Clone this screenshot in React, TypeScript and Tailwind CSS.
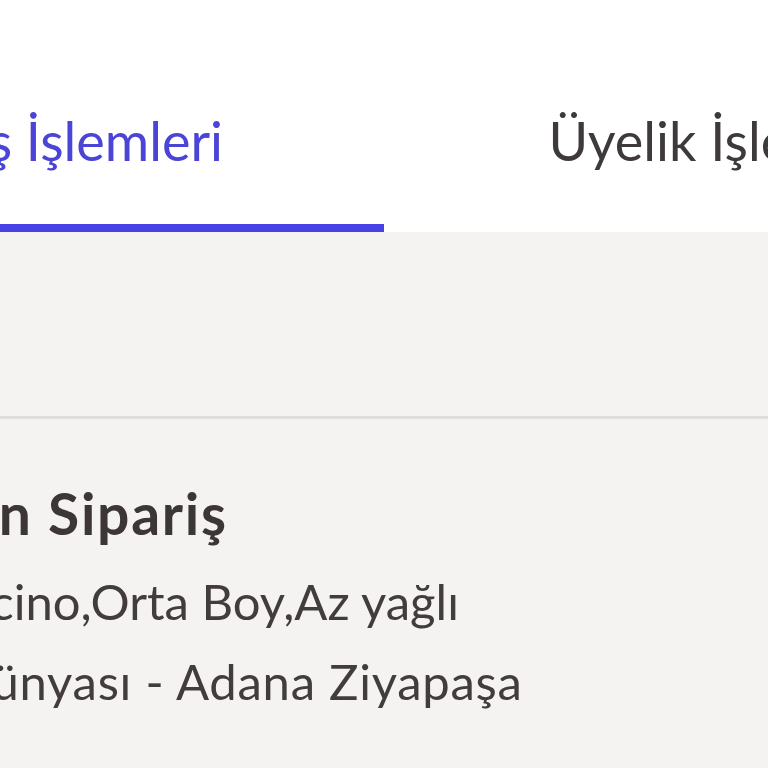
import React from "react";

export default function App() {
  return (
    <div className="w-[768px] h-[768px] overflow-hidden bg-[#f5f3f2] font-['Lato',sans-serif]">
      <div className="bg-white h-[232px] overflow-hidden">
        <div className="flex -ml-[304px] w-[1376px]">
          <div className="w-[688px] h-[232px] flex flex-col items-center justify-between pt-[109px]">
            <span className="text-[54px] leading-[64px] text-[#4a45d6] whitespace-nowrap">Sipariş İşlemleri</span>
            <div className="w-full h-2 bg-[#4841e3]" />
          </div>
          <div className="w-[688px] h-[232px] flex flex-col items-center pt-[109px]">
            <span className="text-[54px] leading-[64px] text-[#3e393a] whitespace-nowrap">Üyelik İşlemleri</span>
          </div>
        </div>
      </div>
      <div className="h-[184px]" />
      <div className="h-[3px] bg-[#e0dedd]" />
      <div className="pt-[62px] text-[#3d3637]">
        <h2 className="text-[57px] leading-[64px] font-bold tracking-[0.03em] whitespace-nowrap -ml-[255px]">Hazırlanan Sipariş</h2>
        <div className="mt-4 text-[49px] leading-[80px] text-[#433c3d]">
          <p className="whitespace-nowrap -ml-[172px]">Cappuccino,Orta Boy,Az yağlı</p>
          <p className="whitespace-nowrap -ml-[197px] tracking-[0.015em]">Kahve Dünyası - Adana Ziyapaşa</p>
        </div>
      </div>
    </div>
  );
}
